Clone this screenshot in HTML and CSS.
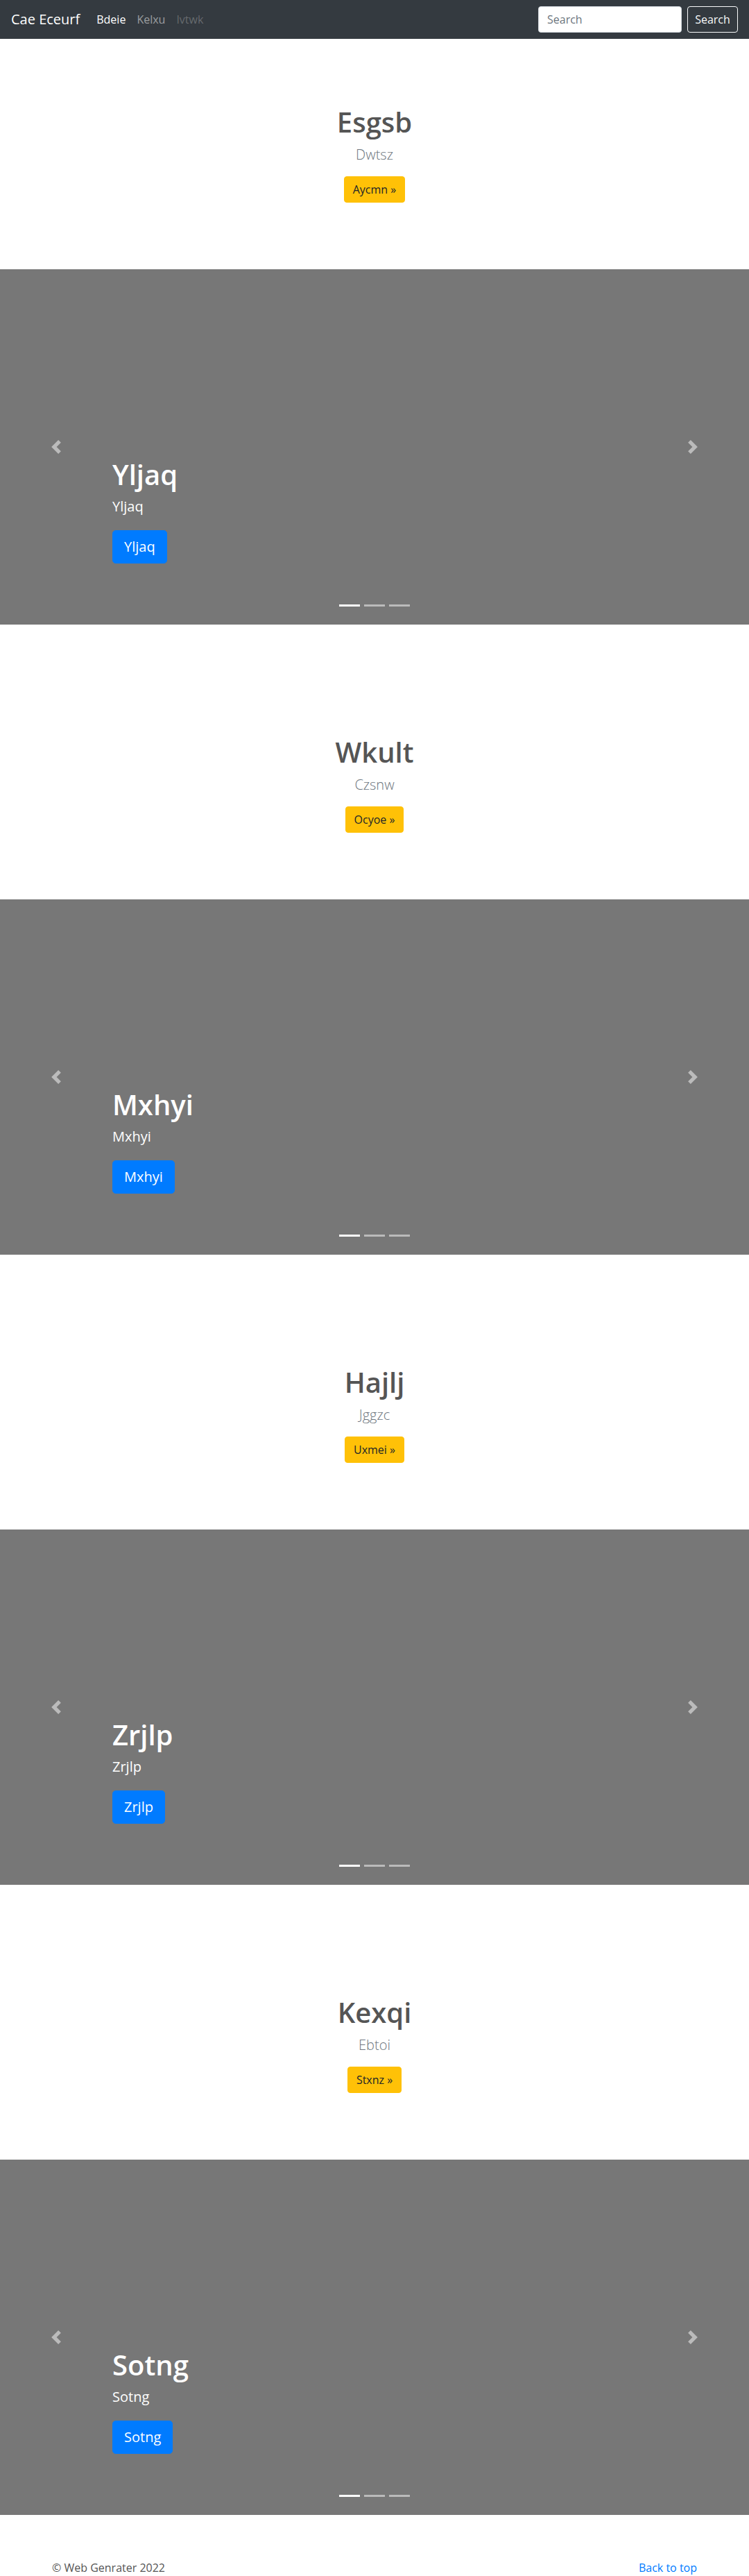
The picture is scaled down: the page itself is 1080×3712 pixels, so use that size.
FILE: index.html
```html
<!DOCTYPE html>
<html lang="en">
<head>
<meta charset="utf-8">
<title>Cae Eceurf</title>
<link rel="stylesheet" href="styles.css">
</head>
<body>
<nav class="navbar">
  <a class="brand" href="#">Cae Eceurf</a>
  <ul class="nav-links">
    <li><a class="nav-link active" href="#">Bdeie</a></li>
    <li><a class="nav-link" href="#">Kelxu</a></li>
    <li><a class="nav-link disabled" href="#">Ivtwk</a></li>
  </ul>
  <form class="search">
    <input class="search-input" type="text" placeholder="Search">
    <button class="search-btn" type="button">Search</button>
  </form>
</nav>

<main>
  <section class="jumbotron">
    <h1 class="jumbo-heading">Esgsb</h1>
    <p class="lead">Dwtsz</p>
    <p class="jumbo-action"><a class="btn-warning" href="#">Aycmn &raquo;</a></p>
  </section>
  <div class="carousel">
    <a class="control control-prev" href="#"><svg class="control-icon" viewBox="0 0 8 8"><path d="M5.25 0l-4 4 4 4 1.5-1.5-2.5-2.5 2.5-2.5-1.5-1.5z"/></svg></a>
    <div class="caption">
      <h1 class="caption-heading">Yljaq</h1>
      <p class="caption-text">Yljaq</p>
      <p class="caption-text"><a class="btn-primary" href="#">Yljaq</a></p>
    </div>
    <a class="control control-next" href="#"><svg class="control-icon" viewBox="0 0 8 8"><path d="M2.75 0l-1.5 1.5 2.5 2.5-2.5 2.5 1.5 1.5 4-4-4-4z"/></svg></a>
    <ol class="indicators"><li class="active"></li><li></li><li></li></ol>
  </div>

  <section class="jumbotron">
    <h1 class="jumbo-heading">Wkult</h1>
    <p class="lead">Czsnw</p>
    <p class="jumbo-action"><a class="btn-warning" href="#">Ocyoe &raquo;</a></p>
  </section>
  <div class="carousel">
    <a class="control control-prev" href="#"><svg class="control-icon" viewBox="0 0 8 8"><path d="M5.25 0l-4 4 4 4 1.5-1.5-2.5-2.5 2.5-2.5-1.5-1.5z"/></svg></a>
    <div class="caption">
      <h1 class="caption-heading">Mxhyi</h1>
      <p class="caption-text">Mxhyi</p>
      <p class="caption-text"><a class="btn-primary" href="#">Mxhyi</a></p>
    </div>
    <a class="control control-next" href="#"><svg class="control-icon" viewBox="0 0 8 8"><path d="M2.75 0l-1.5 1.5 2.5 2.5-2.5 2.5 1.5 1.5 4-4-4-4z"/></svg></a>
    <ol class="indicators"><li class="active"></li><li></li><li></li></ol>
  </div>

  <section class="jumbotron">
    <h1 class="jumbo-heading">Hajlj</h1>
    <p class="lead">Jggzc</p>
    <p class="jumbo-action"><a class="btn-warning" href="#">Uxmei &raquo;</a></p>
  </section>
  <div class="carousel">
    <a class="control control-prev" href="#"><svg class="control-icon" viewBox="0 0 8 8"><path d="M5.25 0l-4 4 4 4 1.5-1.5-2.5-2.5 2.5-2.5-1.5-1.5z"/></svg></a>
    <div class="caption">
      <h1 class="caption-heading">Zrjlp</h1>
      <p class="caption-text">Zrjlp</p>
      <p class="caption-text"><a class="btn-primary" href="#">Zrjlp</a></p>
    </div>
    <a class="control control-next" href="#"><svg class="control-icon" viewBox="0 0 8 8"><path d="M2.75 0l-1.5 1.5 2.5 2.5-2.5 2.5 1.5 1.5 4-4-4-4z"/></svg></a>
    <ol class="indicators"><li class="active"></li><li></li><li></li></ol>
  </div>

  <section class="jumbotron">
    <h1 class="jumbo-heading">Kexqi</h1>
    <p class="lead">Ebtoi</p>
    <p class="jumbo-action"><a class="btn-warning" href="#">Stxnz &raquo;</a></p>
  </section>
  <div class="carousel">
    <a class="control control-prev" href="#"><svg class="control-icon" viewBox="0 0 8 8"><path d="M5.25 0l-4 4 4 4 1.5-1.5-2.5-2.5 2.5-2.5-1.5-1.5z"/></svg></a>
    <div class="caption">
      <h1 class="caption-heading">Sotng</h1>
      <p class="caption-text">Sotng</p>
      <p class="caption-text"><a class="btn-primary" href="#">Sotng</a></p>
    </div>
    <a class="control control-next" href="#"><svg class="control-icon" viewBox="0 0 8 8"><path d="M2.75 0l-1.5 1.5 2.5 2.5-2.5 2.5 1.5 1.5 4-4-4-4z"/></svg></a>
    <ol class="indicators"><li class="active"></li><li></li><li></li></ol>
  </div>
</main>

<footer class="footer">
  <p class="copyright">&copy; Web Genrater 2022</p>
  <p class="back"><a href="#">Back to top</a></p>
</footer>
</body>
</html>
```

FILE: styles.css
```css
* { box-sizing: border-box; }

html, body { margin: 0; padding: 0; }

body {
  font-family: "Open Sans", "Noto Sans", "DejaVu Sans", sans-serif;
  font-size: 16px;
  line-height: 1.5;
  color: #212529;
  background: #fff;
}

a { text-decoration: none; }

/* Navbar */
.navbar {
  display: flex;
  align-items: center;
  height: 56px;
  padding: 8px 16px;
  background: #343a40;
}
.brand {
  color: #fff;
  font-size: 20px;
  line-height: 30px;
  margin-right: 16px;
  white-space: nowrap;
}
.nav-links {
  display: flex;
  list-style: none;
  margin: 0;
  padding: 0;
}
.nav-link {
  display: block;
  padding: 8px;
  line-height: 24px;
  color: rgba(255, 255, 255, 0.5);
}
.nav-link.active { color: #fff; }
.nav-link.disabled { color: rgba(255, 255, 255, 0.25); }

.search {
  display: flex;
  align-items: center;
  margin: 0 0 0 auto;
}
.search-input {
  width: 207px;
  height: 38px;
  padding: 6px 12px;
  margin-right: 8px;
  font-family: inherit;
  font-size: 16px;
  line-height: 24px;
  color: #495057;
  background: #fff;
  border: 1px solid #ced4da;
  border-radius: 4px;
}
.search-input::placeholder { color: #6c757d; }
.search-btn {
  width: 73px;
  height: 38px;
  padding: 6px 0;
  font-family: inherit;
  font-size: 16px;
  line-height: 24px;
  color: #f8f9fa;
  background: transparent;
  border: 1px solid #f8f9fa;
  border-radius: 4px;
}

/* Jumbotron */
.jumbotron {
  padding: 96px 16px;
  text-align: center;
  background: #fff;
}
.jumbo-heading {
  margin: 0 0 8px;
  font-size: 40px;
  line-height: 48px;
  font-weight: 600;
  color: #555;
}
.lead {
  margin: 0 0 16px;
  font-size: 20px;
  line-height: 30px;
  font-weight: 300;
  color: #6c757d;
}
.jumbo-action { margin: 0; }
.btn-warning {
  display: inline-block;
  padding: 6px 12px;
  font-size: 16px;
  line-height: 24px;
  color: #212529;
  background: #ffc107;
  border: 1px solid #ffc107;
  border-radius: 4px;
}

/* Carousel */
.carousel {
  position: relative;
  height: 512px;
  margin-bottom: 64px;
  background: #777;
  overflow: hidden;
}
.control {
  position: absolute;
  top: 0;
  bottom: 0;
  width: 15%;
  display: flex;
  align-items: center;
  justify-content: center;
  opacity: 0.5;
}
.control-prev { left: 0; }
.control-next { right: 0; }
.control-icon {
  width: 20px;
  height: 20px;
  fill: #fff;
}
.caption {
  position: absolute;
  left: 15%;
  right: 15%;
  bottom: 48px;
  padding: 20px 0;
  color: #fff;
  text-align: left;
  z-index: 10;
}
.caption-heading {
  margin: 0 0 8px;
  font-size: 40px;
  line-height: 48px;
  font-weight: 600;
}
.caption-text {
  margin: 0 0 20px;
  font-size: 20px;
  line-height: 28px;
}
.btn-primary {
  display: inline-block;
  padding: 8px 16px;
  font-size: 20px;
  line-height: 30px;
  color: #fff;
  background: #007bff;
  border: 1px solid #007bff;
  border-radius: 4.8px;
}
.indicators {
  position: absolute;
  left: 15%;
  right: 15%;
  bottom: 0;
  display: flex;
  justify-content: center;
  list-style: none;
  margin: 0 0 16px;
  padding: 0;
  z-index: 15;
}
.indicators li {
  width: 30px;
  height: 23px;
  margin: 0 3px;
  border-top: 10px solid transparent;
  border-bottom: 10px solid transparent;
  background: #fff;
  background-clip: padding-box;
  opacity: 0.5;
}
.indicators li.active { opacity: 1; }

/* Footer */
.footer {
  display: flex;
  justify-content: space-between;
  width: 960px;
  margin: 0 auto;
  padding: 0 15px;
}
.copyright, .back {
  margin: 0 0 16px;
}
.copyright { color: #555; }
.back a { color: #007bff; }
```
